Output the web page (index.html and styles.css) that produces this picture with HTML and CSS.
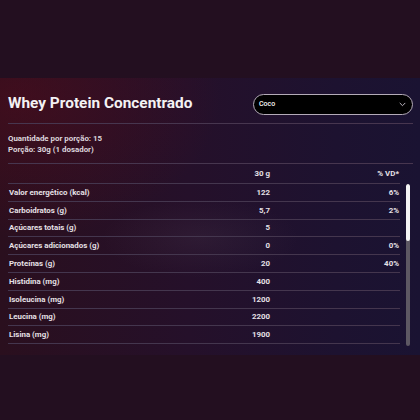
FILE: index.html
```html
<!DOCTYPE html>
<html lang="pt-BR">
<head>
<meta charset="utf-8">
<title>Whey Protein Concentrado</title>
<link rel="stylesheet" href="styles.css">
</head>
<body>
<section class="panel">
  <div class="glow"></div>
  <header class="head">
    <h1 class="title">Whey Protein Concentrado</h1>
    <div class="select">
      <span class="select-label">Coco</span>
      <svg class="chev" width="7" height="5" viewBox="0 0 7 5"><path d="M1 1.2 L3.5 3.7 L6 1.2" fill="none" stroke="#b9b3bd" stroke-width="1" stroke-linecap="round" stroke-linejoin="round"/></svg>
    </div>
  </header>
  <div class="info">
    <p>Quantidade por porção: 15</p>
    <p>Porção: 30g (1 dosador)</p>
  </div>
  <div class="table-wrap">
    <div class="table">
      <div class="row hrow"><span></span><span class="num">30 g</span><span class="num">% VD*</span></div>
      <div class="row"><span>Valor energético (kcal)</span><span class="num">122</span><span class="num">6%</span></div>
      <div class="row"><span>Carboidratos (g)</span><span class="num">5,7</span><span class="num">2%</span></div>
      <div class="row"><span>Açúcares totais (g)</span><span class="num">5</span><span class="num"></span></div>
      <div class="row"><span>Açúcares adicionados (g)</span><span class="num">0</span><span class="num">0%</span></div>
      <div class="row"><span>Proteínas (g)</span><span class="num">20</span><span class="num">40%</span></div>
      <div class="row"><span>Histidina (mg)</span><span class="num">400</span><span class="num"></span></div>
      <div class="row"><span>Isoleucina (mg)</span><span class="num">1200</span><span class="num"></span></div>
      <div class="row"><span>Leucina (mg)</span><span class="num">2200</span><span class="num"></span></div>
      <div class="row"><span>Lisina (mg)</span><span class="num">1900</span><span class="num"></span></div>
    </div>
    <div class="scrollbar"><div class="thumb"></div></div>
  </div>
</section>
</body>
</html>
```
FILE: styles.css
```css
html, body {
  margin: 0;
  padding: 0;
}
body {
  width: 420px;
  height: 420px;
  background: #230f20;
  font-family: Roboto, "Liberation Sans", sans-serif;
  color: #e8e2e8;
  overflow: hidden;
}
.panel {
  position: relative;
  margin-top: 78px;
  height: 277px;
  padding: 0 7px 0 8px;
  background:
    radial-gradient(ellipse 200px 140px at 20px 20px, rgba(90, 12, 28, 0.45), rgba(90, 12, 28, 0) 100%),
    linear-gradient(90deg, #2a0f1e 0%, #25102a 45%, #1d1230 80%, #1a1332 100%);
  overflow: hidden;
}
.glow {
  position: absolute;
  left: 100px;
  top: 120px;
  width: 200px;
  height: 80px;
  background: radial-gradient(ellipse at center, rgba(140, 130, 140, 0.09), rgba(140, 130, 140, 0) 70%);
  pointer-events: none;
}
.head {
  position: relative;
  display: flex;
  justify-content: space-between;
  align-items: center;
  height: 44px;
  padding-top: 1px;
  border-bottom: 1px solid #47364f;
}
.title {
  margin: 0;
  font-size: 15.4px;
  font-weight: 700;
  color: #f4f2f4;
  padding-top: 3px;
}
.select {
  display: flex;
  align-items: center;
  justify-content: space-between;
  box-sizing: border-box;
  width: 160px;
  height: 21px;
  margin-top: 6px;
  padding: 0 6px 0 5px;
  background: #000;
  border: 1px solid #b4abb8;
  border-radius: 11px;
}
.select-label {
  font-size: 7px;
  font-weight: 500;
  color: #fff;
}
.info {
  position: relative;
  padding: 9px 0 8px 0;
  border-bottom: 1px solid #47364f;
}
.info p {
  margin: 0;
  font-size: 7.9px;
  font-weight: 700;
  line-height: 11px;
  color: #ddd6dd;
}
.table-wrap {
  position: relative;
  display: flex;
  align-items: flex-start;
}
.table {
  width: 392px;
}
.row {
  display: grid;
  grid-template-columns: 202px 60px 129px;
  align-items: center;
  height: 16.8px;
  padding-right: 1px;
  border-bottom: 1px solid #44364e;
  font-size: 7.9px;
  font-weight: 700;
  color: #e6e0e6;
}
.row span:first-child {
  padding-left: 1px;
}
.hrow {
  height: 19px;
}
.num {
  text-align: right;
}
.scrollbar {
  margin-left: 6px;
  margin-top: 20px;
  width: 3.5px;
  height: 162px;
  border-radius: 2px;
  background: #5d5863;
  overflow: hidden;
}
.thumb {
  height: 57px;
  background: #f4f4f4;
  border-radius: 2px;
}
```
